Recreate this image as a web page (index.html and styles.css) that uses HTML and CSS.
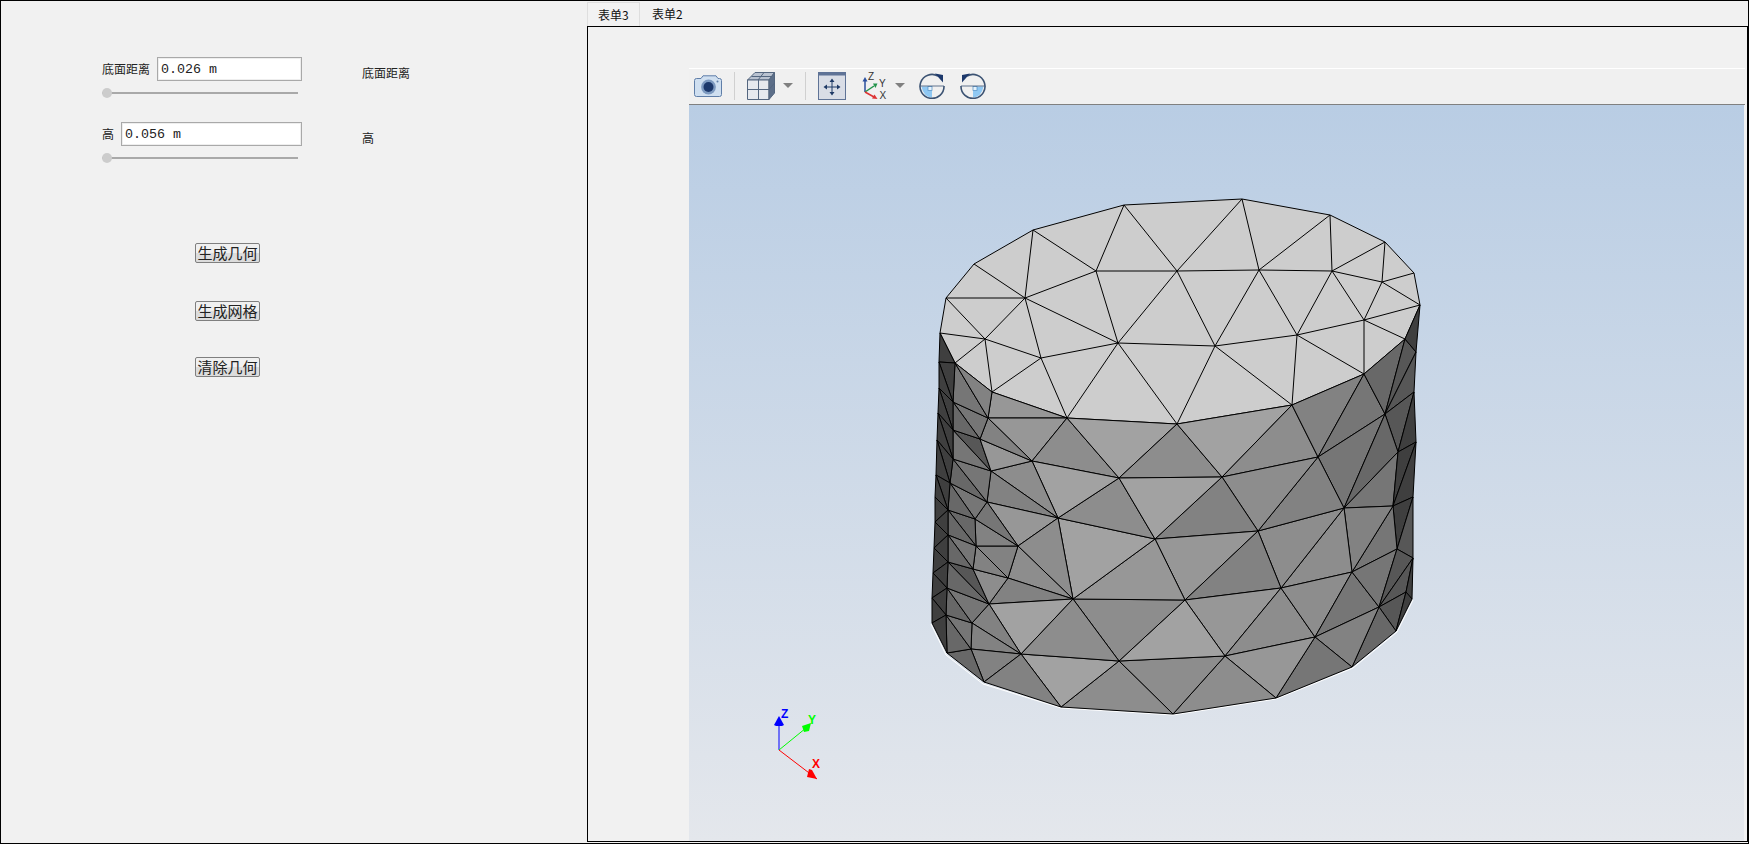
FILE: index.html
```html
<!DOCTYPE html>
<html lang="zh">
<head>
<meta charset="utf-8">
<title>几何</title>
<link rel="stylesheet" href="styles.css">
</head>
<body>
<div class="app">
  <section class="side">
    <div class="group">
      <div class="form">
        <div class="field"><label class="field-label">底面距离</label><input class="field-input" value="0.026 m"></div>
        <div class="slider"><span class="thumb"></span></div>
      </div>
      <span class="side-label">底面距离</span>
    </div>
    <div class="group group-next">
      <div class="form">
        <div class="field"><label class="field-label">高</label><input class="field-input" value="0.056 m"></div>
        <div class="slider"><span class="thumb"></span></div>
      </div>
      <span class="side-label">高</span>
    </div>
    <div class="actions">
      <button class="btn">生成几何</button>
      <button class="btn btn-mesh">生成网格</button>
      <button class="btn btn-clear">清除几何</button>
    </div>
  </section>
  <section class="main">
    <nav class="tabs">
      <span class="tab tab-active">表单3</span>
      <span class="tab">表单2</span>
    </nav>
    <div class="page">
      <div class="viewer">
        <div class="toolbar">
          <svg class="ico ico-camera" viewBox="0 0 28 22">
            <path class="cam-body" d="M2.5 3.5H7L9 .8H22L24 3.5H25.5Q27.5 3.5 27.5 5.5V19.5Q27.5 21.5 25.5 21.5H2.5Q.5 21.5 .5 19.5V5.5Q.5 3.5 2.5 3.5Z"/>
            <circle class="cam-ring" cx="14.5" cy="12" r="7.4"/>
            <circle class="cam-lens" cx="14.5" cy="12" r="5"/>
            <circle class="cam-dot" cx="23.5" cy="6.5" r="1"/>
          </svg>
          <span class="sep"></span>
          <svg class="ico ico-cube" viewBox="0 0 28 28">
            <path class="cube-top" d="M.5 8L8 .5H27.5L22 8Z"/>
            <path class="cube-front" d="M.5 8H22V27.5H.5Z"/>
            <path class="cube-side" d="M22 8L27.5 .5V21L22 27.5Z"/>
            <path class="cube-line" d="M11.5 8V27.5M.5 17.5H22M11 8L17 .5M4.5 4.5H25M22 17.5L27.5 11"/>
          </svg>
          <svg class="caret" viewBox="0 0 10 5"><path d="M0 0H10L5 5Z"/></svg>
          <span class="sep"></span>
          <svg class="ico ico-fit" viewBox="0 0 28 28">
            <rect class="fit-box" x=".5" y=".5" width="27" height="27"/>
            <rect class="fit-bar" x=".5" y=".5" width="27" height="3"/>
            <path class="fit-arrow" d="M14 9V21M8 15H20"/>
            <path class="fit-head" d="M14 6.5L16.500 10H11.500ZM14 23.500L16.500 20H11.500ZM5.500 15L9 12.500V17.500ZM22.500 15L19 12.500V17.500Z"/>
          </svg>
          <svg class="ico ico-triad" viewBox="0 0 32 28">
            <path class="tr-z" d="M3 20V8"/><path class="tr-zh" d="M3 5L5.500 9.500H.5Z"/>
            <path class="tr-y" d="M3 20L12 14"/><path class="tr-yh" d="M15.500 11.500L11 11.500L13.500 16Z"/>
            <path class="tr-x" d="M3 20L12 25"/><path class="tr-xh" d="M15.500 27L10 26.500L12.500 22.500Z"/>
            <text class="tr-text" x="6" y="8">Z</text>
            <text class="tr-text" x="17" y="14.500">Y</text>
            <text class="tr-text" x="17.500" y="27">X</text>
          </svg>
          <svg class="caret caret-tight" viewBox="0 0 10 5"><path d="M0 0H10L5 5Z"/></svg>
          <svg class="ico ico-rot" viewBox="0 0 26 26">
            <path class="rot-fill" d="M2.500 13.500H13V24.500Q4.500 24 2.500 13.500Z"/>
            <rect class="rot-sq" x="9" y="13.500" width="4" height="4"/>
            <path class="rot-arc" d="M19 3A12 12 0 1 0 25 13"/>
            <path class="rot-bar" d="M1 13H25"/>
            <path class="rot-head" d="M16 .5L24 2V9.500Z"/>
          </svg>
          <svg class="ico ico-rot ico-rot-next" viewBox="0 0 26 26">
            <g transform="matrix(-1 0 0 1 26 0)">
              <path class="rot-fill" d="M2.500 13.500H13V24.500Q4.500 24 2.500 13.500Z"/>
              <rect class="rot-sq" x="9" y="13.500" width="4" height="4"/>
              <path class="rot-arc" d="M19 3A12 12 0 1 0 25 13"/>
              <path class="rot-bar" d="M1 13H25"/>
              <path class="rot-head" d="M16 .5L24 2V9.500Z"/>
            </g>
          </svg>
        </div>
        <svg class="scene" viewBox="689 105 1055 736">
          <polyline class="rim" points="931,624 946,655 983,684 1061,708 1173,715 1276,699 1353,668 1397,632 1413,600"/>
          <g class="mesh">
            <polygon class="c1" points="1124,205 1033,230 974,264 946,298 940,333 955,363 992,392 1067,418 1177,424 1292,405 1364,374 1405,339 1420,305 1414,273 1385,242 1330,215 1242,199"/>
            <path class="lines" d="M1033,230L1096,271L1124,205L1177,271L1242,199M1096,271H1177L1259,270L1332,271L1382,282M1033,230L1025,298L1096,271L1118,343L1177,271L1215,346L1259,270L1297,335L1332,271L1364,320L1382,282L1385,242M974,264L1025,298L946,298L985,339L1025,298L1041,358L1118,343L1215,346L1297,335L1364,320L1420,305L1382,282L1414,273M1025,298L1118,343M940,333L985,339L955,363M985,339L1041,358M985,339L992,392L1041,358L1067,418L1118,343L1177,424L1215,346L1292,405L1297,335L1364,374L1364,320L1405,339M1242,199L1259,270L1330,215L1332,271L1385,242"/>

            <polygon class="c3" points="992,392 1067,418 988,418"/>
            <polygon class="c3" points="1067,418 988,418 1032,461"/>
            <polygon class="c4" points="1067,418 1032,461 1119,478"/>
            <polygon class="c2" points="1067,418 1119,478 1177,424"/>
            <polygon class="c4" points="1177,424 1119,478 1222,477"/>
            <polygon class="c2" points="1177,424 1292,405 1222,477"/>
            <polygon class="c4" points="1292,405 1222,477 1318,457"/>
            <polygon class="c5" points="1292,405 1364,374 1318,457"/>
            <polygon class="c6" points="1364,374 1318,457 1385,414"/>
            <polygon class="c6" points="1318,457 1385,414 1344,508"/>
            <polygon class="c7" points="1364,374 1405,339 1385,414"/>
            <polygon class="c8" points="1405,339 1385,414 1416,352"/>
            <polygon class="c9" points="1405,339 1420,305 1416,352"/>
            <polygon class="c8" points="1385,414 1416,352 1414,392"/>
            <polygon class="c8" points="1385,414 1414,392 1398,452"/>
            <polygon class="c9" points="1414,392 1416,442 1398,452"/>
            <polygon class="c7" points="1385,414 1398,452 1344,508"/>
            <polygon class="c6" points="1344,508 1398,452 1393,506"/>
            <polygon class="c9" points="1398,452 1416,442 1393,506"/>
            <polygon class="c9" points="1416,442 1413,497 1393,506"/>
            <polygon class="c9" points="1393,506 1413,497 1397,549"/>
            <polygon class="c8" points="1413,497 1413,558 1397,549"/>
            <polygon class="c6" points="1393,506 1397,549 1352,572"/>
            <polygon class="c5" points="1344,508 1393,506 1352,572"/>
            <polygon class="c4" points="1344,508 1352,572 1281,588"/>
            <polygon class="c4" points="1344,508 1281,588 1258,531"/>
            <polygon class="c5" points="1318,457 1344,508 1258,531"/>
            <polygon class="c4" points="1222,477 1318,457 1258,531"/>
            <polygon class="c5" points="1222,477 1258,531 1155,539"/>
            <polygon class="c3" points="1155,539 1258,531 1185,600"/>
            <polygon class="c5" points="1258,531 1281,588 1185,600"/>
            <polygon class="c3" points="1185,600 1281,588 1225,656"/>
            <polygon class="c4" points="1281,588 1315,637 1225,656"/>
            <polygon class="c4" points="1281,588 1352,572 1315,637"/>
            <polygon class="c6" points="1352,572 1379,607 1315,637"/>
            <polygon class="c6" points="1352,572 1397,549 1379,607"/>
            <polygon class="c8" points="1397,549 1413,558 1379,607"/>
            <polygon class="c8" points="1413,558 1406,592 1379,607"/>
            <polygon class="c9" points="1413,558 1412,599 1406,592"/>
            <polygon class="c8" points="1406,592 1396,631 1379,607"/>
            <polygon class="c9" points="1406,592 1412,599 1396,631"/>
            <polygon class="c7" points="1379,607 1396,631 1352,667"/>
            <polygon class="c5" points="1379,607 1315,637 1352,667"/>
            <polygon class="c6" points="1315,637 1352,667 1276,698"/>
            <polygon class="c3" points="1315,637 1225,656 1276,698"/>
            <polygon class="c4" points="1225,656 1276,698 1173,714"/>
            <polygon class="c4" points="1119,661 1225,656 1173,714"/>
            <polygon class="c4" points="1119,661 1061,707 1173,714"/>
            <polygon class="c2" points="1021,654 1119,661 1061,707"/>
            <polygon class="c2" points="1119,661 1185,600 1225,656"/>
            <polygon class="c4" points="1073,599 1185,600 1119,661"/>
            <polygon class="c3" points="1073,599 1155,539 1185,600"/>
            <polygon class="c2" points="1058,518 1155,539 1073,599"/>
            <polygon class="c4" points="1058,518 1119,478 1155,539"/>
            <polygon class="c2" points="1119,478 1222,477 1155,539"/>
            <polygon class="c2" points="1032,461 1058,518 1119,478"/>
            <polygon class="c4" points="1032,461 991,471 1058,518"/>
            <polygon class="c5" points="991,471 987,502 1058,518"/>
            <polygon class="c3" points="987,502 1018,546 1058,518"/>
            <polygon class="c4" points="1018,546 1073,599 1058,518"/>
            <polygon class="c4" points="1018,546 1008,578 1073,599"/>
            <polygon class="c5" points="1008,578 989,604 1073,599"/>
            <polygon class="c2" points="989,604 1021,654 1073,599"/>
            <polygon class="c4" points="1073,599 1021,654 1119,661"/>
            <polygon class="c5" points="989,604 972,623 1021,654"/>
            <polygon class="c5" points="972,623 971,649 1021,654"/>
            <polygon class="c5" points="971,649 984,682 1021,654"/>
            <polygon class="c5" points="984,682 1061,707 1021,654"/>
            <polygon class="c7" points="947,653 971,649 984,682"/>
            <polygon class="c7" points="947,653 946,615 971,649"/>
            <polygon class="c6" points="946,615 972,623 971,649"/>
            <polygon class="c7" points="947,588 946,615 972,623"/>
            <polygon class="c6" points="947,588 989,604 972,623"/>
            <polygon class="c7" points="948,562 947,588 989,604"/>
            <polygon class="c8" points="948,562 973,569 989,604"/>
            <polygon class="c4" points="973,569 1008,578 989,604"/>
            <polygon class="c5" points="976,546 1008,578 973,569"/>
            <polygon class="c5" points="976,546 1018,546 1008,578"/>
            <polygon class="c5" points="975,519 1018,546 976,546"/>
            <polygon class="c6" points="975,519 987,502 1018,546"/>
            <polygon class="c7" points="948,510 975,519 976,546"/>
            <polygon class="c6" points="950,483 987,502 975,519"/>
            <polygon class="c7" points="950,483 948,510 975,519"/>
            <polygon class="c7" points="948,510 948,535 976,546"/>
            <polygon class="c6" points="948,535 976,546 973,569"/>
            <polygon class="c7" points="948,535 948,562 973,569"/>
            <polygon class="c7" points="953,459 950,483 987,502"/>
            <polygon class="c6" points="953,459 991,471 987,502"/>
            <polygon class="c6" points="953,430 953,459 991,471"/>
            <polygon class="c8" points="953,430 980,439 991,471"/>
            <polygon class="c3" points="980,439 1032,461 991,471"/>
            <polygon class="c5" points="988,418 1032,461 980,439"/>
            <polygon class="c6" points="953,402 988,418 980,439"/>
            <polygon class="c7" points="953,402 953,430 980,439"/>
            <polygon class="c6" points="955,363 953,402 988,418"/>
            <polygon class="c5" points="955,363 992,392 988,418"/>

            <polygon class="c9" points="940,333 939,362 955,363"/>
            <polygon class="c9" points="939,362 955,363 953,402"/>
            <polygon class="c9" points="939,362 939,388 953,402"/>
            <polygon class="c9" points="939,388 953,402 953,430"/>
            <polygon class="c9" points="939,388 938,413 953,430"/>
            <polygon class="c9" points="938,413 953,430 953,459"/>
            <polygon class="c9" points="938,413 937,440 953,459"/>
            <polygon class="c9" points="937,440 953,459 950,483"/>
            <polygon class="c9" points="937,440 936,475 950,483"/>
            <polygon class="c9" points="936,475 950,483 948,510"/>
            <polygon class="c9" points="936,475 935,497 948,510"/>
            <polygon class="c9" points="935,497 935,522 948,510"/>
            <polygon class="c9" points="935,522 948,510 948,535"/>
            <polygon class="c9" points="935,522 934,548 948,535"/>
            <polygon class="c9" points="934,548 948,535 948,562"/>
            <polygon class="c9" points="934,548 933,573 948,562"/>
            <polygon class="c9" points="933,573 948,562 947,588"/>
            <polygon class="c9" points="933,573 932,598 947,588"/>
            <polygon class="c9" points="932,598 947,588 946,615"/>
            <polygon class="c9" points="932,598 932,623 946,615"/>
            <polygon class="c9" points="932,623 946,615 947,653"/>
          </g>
          <path class="ax-z" d="M779,750V722"/>
          <path class="ax-zh" d="M779,716L784,725L782,726H776L774,725Z"/>
          <path class="ax-y" d="M779,750L806,728"/>
          <path class="ax-yh" d="M811,723L809,731L804,732L802,726Z"/>
          <path class="ax-x" d="M779,750L817,779"/>
          <path class="ax-xh" d="M817,779L807,777L809,769L812,770Z"/>
          <text class="ax-t ax-t-z" x="781" y="718">Z</text>
          <text class="ax-t ax-t-y" x="808" y="724">Y</text>
          <text class="ax-t ax-t-x" x="812" y="768">X</text>
        </svg>
      </div>
    </div>
  </section>
</div>
</body>
</html>
```
FILE: styles.css
```css
* { box-sizing: border-box; }
html, body { margin: 0; padding: 0; }
body { background: #f0f0f0; overflow: hidden; }

.app {
  width: 1749px;
  height: 844px;
  display: flex;
  background: #f1f1f1;
  border: 1px solid #000;
  font-family: "Noto Sans CJK SC", "Liberation Sans", sans-serif;
  font-size: 12px;
  color: #222;
}

/* left panel */
.side {
  width: 586px;
  flex: none;
  padding: 56px 0 0 101px;
}
.group { display: flex; }
.group-next { margin-top: 23px; }
.form { width: 200px; }
.field { display: flex; align-items: center; gap: 7px; }
.field-label { line-height: 16px; white-space: nowrap; }
.field-input {
  flex: 1;
  min-width: 0;
  height: 24px;
  padding: 0 3px;
  border: 1px solid #a9a9a9;
  box-shadow: inset 0 0 0 1px #eee;
  background: #fff;
  font-family: "Liberation Mono", monospace;
  font-size: 13.33px;
  color: #222;
  outline: none;
}
.slider {
  position: relative;
  width: 196px;
  height: 12px;
  margin-top: 6px;
  background: linear-gradient(#a9a9a9, #a9a9a9) 0 5px / 100% 2px no-repeat;
}
.thumb {
  position: absolute;
  left: 0;
  top: 1px;
  width: 10px;
  height: 10px;
  border-radius: 50%;
  background: #ccc;
}
.side-label { margin: 8px 0 0 60px; line-height: 15px; }
.actions {
  display: flex;
  flex-direction: column;
  align-items: flex-start;
  margin: 79px 0 0 93px;
}
.btn {
  width: 65px;
  height: 20px;
  padding: 0;
  border: 1px solid #7f7f7f;
  border-radius: 2px;
  background: linear-gradient(#f0f0f0 50%, #dcdcdc 50%);
  font-family: "Noto Sans CJK SC", sans-serif;
  font-size: 15px;
  line-height: 18px;
  color: #222;
  white-space: nowrap;
}
.btn-mesh { margin-top: 38px; }
.btn-clear { margin-top: 36px; }

/* right area */
.main { flex: 1; min-width: 0; display: flex; flex-direction: column; }
.tabs { height: 25px; flex: none; display: flex; padding-top: 1px; }
.tab { padding: 0 12px; line-height: 24px; color: #111; white-space: nowrap; }
.tab-active {
  width: 53px;
  padding: 0 10px;
  background: #f2f2f2;
  border: 1px solid #dedede;
  border-bottom: 0;
}
.page {
  flex: 1;
  min-height: 0;
  margin-bottom: 1px;
  padding: 41px 2px 0 101px;
  border: 1px solid #000;
  display: flex;
}
.viewer { flex: 1; min-width: 0; display: flex; flex-direction: column; }

.toolbar {
  height: 37px;
  flex: none;
  display: flex;
  align-items: center;
  padding: 0 0 2px 5px;
  background: #f0f0f0;
  border-top: 1px solid #fff;
  border-bottom: 1px solid #808080;
}
.ico { display: block; flex: none; }
.ico-camera { width: 28px; height: 22px; }
.ico-cube { width: 28px; height: 28px; margin-left: 12px; }
.ico-fit { width: 28px; height: 28px; margin-left: 12px; }
.ico-triad { width: 32px; height: 28px; margin-left: 16px; }
.ico-rot { width: 26px; height: 26px; margin-left: 14px; }
.ico-rot-next { margin-left: 15px; }
.sep { width: 1px; height: 28px; margin-left: 12px; background: #d0d0d0; flex: none; }
.caret { width: 10px; height: 5px; margin-left: 8px; flex: none; fill: #808080; }
.caret-tight { margin-left: 1px; }

.cam-body { fill: #cfdff0; stroke: #5f7ea8; }
.cam-ring { fill: #7d9ac0; }
.cam-lens { fill: #1c386b; }
.cam-dot { fill: #5f7ea8; }

.cube-top { fill: #b9c2d0; stroke: #54667f; }
.cube-front { fill: #e6e9ee; stroke: #54667f; }
.cube-side { fill: #5c6e88; stroke: #54667f; }
.cube-line { fill: none; stroke: #54667f; }

.fit-box { fill: #d9dde6; stroke: #5f7396; }
.fit-bar { fill: #5f7396; }
.fit-arrow { stroke: #1f3a66; fill: none; }
.fit-head { fill: #1f3a66; }

.tr-z { stroke: #2a4f9e; stroke-width: 1.5; }
.tr-zh { fill: #2a4f9e; }
.tr-y { stroke: #22934a; stroke-width: 1.5; }
.tr-yh { fill: #22934a; }
.tr-x { stroke: #dd3333; stroke-width: 1.5; }
.tr-xh { fill: #dd3333; }
.tr-text { font-family: "Liberation Sans", sans-serif; font-size: 10px; fill: #333; }

.rot-fill { fill: #8fc8f3; }
.rot-sq { fill: #e4f2fc; stroke: #4f8ec4; stroke-width: .7; }
.rot-arc { fill: none; stroke: #3c5373; stroke-width: 1.6; }
.rot-bar { fill: none; stroke: #3c5373; stroke-width: .8; }
.rot-head { fill: #1c386b; }

/* 3d view */
.scene {
  display: block;
  flex: none;
  width: 1055px;
  height: 736px;
  background: linear-gradient(#b9cde4, #e4e7ec);
}
.rim { fill: none; stroke: #fff; stroke-width: 1; }
.mesh polygon, .lines { stroke: #000; stroke-width: 1; stroke-linejoin: round; }
.lines { fill: none; }
.c1 { fill: #cdcdcd; }
.c2 { fill: #a2a2a2; }
.c3 { fill: #979797; }
.c4 { fill: #8d8d8d; }
.c5 { fill: #828282; }
.c6 { fill: #767676; }
.c7 { fill: #686868; }
.c8 { fill: #575757; }
.c9 { fill: #3f3f3f; }

.ax-z { stroke: #0000ff; fill: none; }
.ax-zh { fill: #0000ff; }
.ax-y { stroke: #00ff00; fill: none; }
.ax-yh { fill: #00ff00; }
.ax-x { stroke: #ff0000; fill: none; }
.ax-xh { fill: #ff0000; }
.ax-t { font-family: "Liberation Sans", sans-serif; font-size: 12px; font-weight: 700; }
.ax-t-z { fill: #0000ff; }
.ax-t-y { fill: #00ff00; }
.ax-t-x { fill: #ff0000; }
```
